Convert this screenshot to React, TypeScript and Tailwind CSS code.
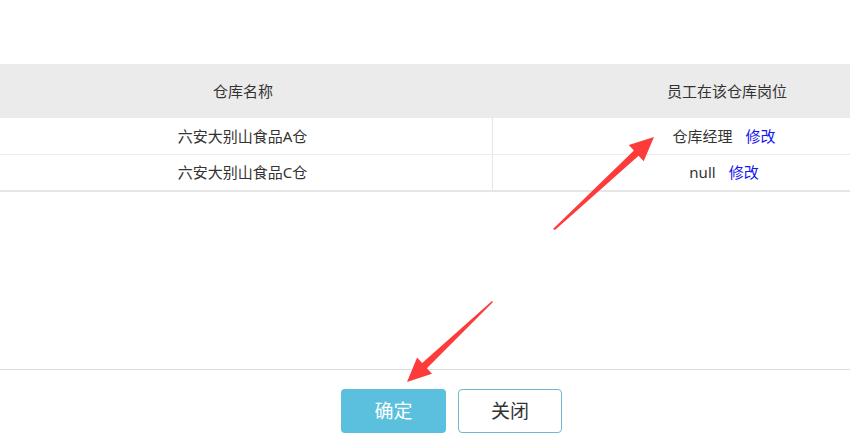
import React from 'react';

const rows = [
  { name: '六安大别山食品A仓', post: '仓库经理' },
  { name: '六安大别山食品C仓', post: 'null' },
];

const Arrow = ({ points }: { points: string }) => (
  <polygon points={points} fill="#fe3b3b" />
);

const App = () => {
  return (
    <div
      className="relative w-[850px] h-[447px] overflow-hidden bg-white text-[#333]"
      style={{ fontFamily: '"Noto Sans", "Noto Sans CJK SC", sans-serif' }}
    >
      <div className="h-[64px]" />

      {/* table */}
      <div className="ml-[-7px] w-[968px] text-[15px]">
        <div className="flex h-[54px] items-center bg-[#ebebeb]">
          <div className="w-[500px] text-center">仓库名称</div>
          <div className="w-[468px] text-center">员工在该仓库岗位</div>
        </div>
        {rows.map((r, i) => (
          <div
            key={r.name}
            className={`flex h-[37px] ${i === rows.length - 1 ? 'border-b-2 border-[#e6e6e6]' : 'border-b border-[#ececec]'}`}
          >
            <div className="flex w-[500px] items-center justify-center border-r border-[#e6e6e6]">{r.name}</div>
            <div className="flex w-[468px] items-center justify-center pr-[6px]">
              <span>{r.post}</span>
              <span className="ml-[13px] text-[#1515f0] cursor-pointer">修改</span>
            </div>
          </div>
        ))}
      </div>

      <div className="h-[177px]" />

      {/* footer */}
      <div className="border-t border-[#dcdcdc]">
        <div className="ml-[-7px] flex w-[917px] justify-center gap-3 pt-[19px]">
          <button className="h-[44px] w-[105px] rounded bg-[#5bc0de] text-[19px] text-white">确定</button>
          <button className="h-[44px] w-[104px] rounded border border-[#6fb9cd] bg-white text-[19px] text-[#333]">关闭</button>
        </div>
      </div>

      {/* annotation arrows */}
      <svg className="pointer-events-none absolute left-0 top-0" width="850" height="447">
        <Arrow points="553,229 633.9,150.6 628.8,145 654,137 643.7,161.3 638.6,155.7 555,230" />
        <Arrow points="493,302 426.9,368.2 432,373.7 407,382 417.1,357.6 422.2,363.1 492,301" />
      </svg>
    </div>
  );
};

export default App;
